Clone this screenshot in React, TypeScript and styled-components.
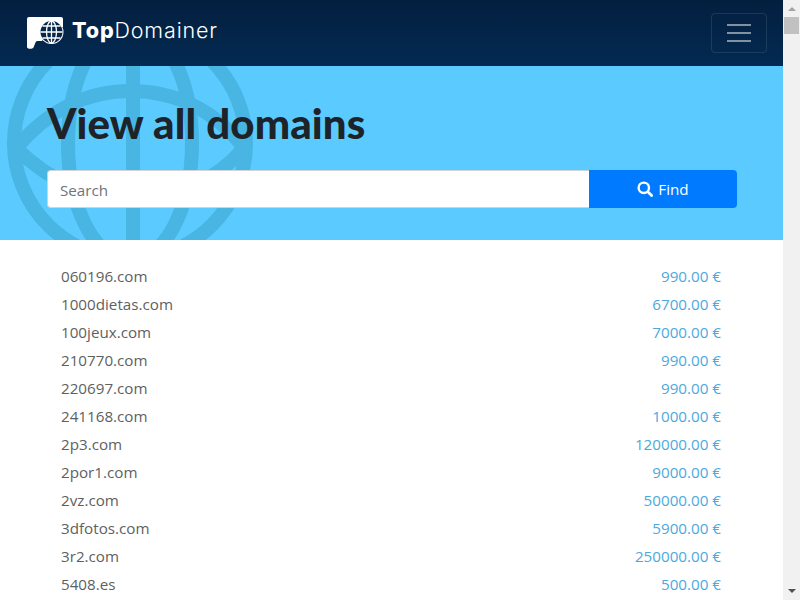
import { FC } from "react";
import styled, { createGlobalStyle } from "styled-components";

const GlobalStyle = createGlobalStyle`
  html, body {
    margin: 0;
    padding: 0;
    height: 100%;
    overflow: hidden;
    background: #fff;
  }
`;

const Page = styled.div`
  display: flex;
  width: 800px;
  height: 600px;
  overflow: hidden;
  font-family: "Open Sans", "Liberation Sans", sans-serif;
`;

const Main = styled.div`
  width: 783px;
  flex: none;
`;

const NavBar = styled.nav`
  height: 66px;
  box-sizing: border-box;
  padding: 13px 16px 0 26px;
  display: flex;
  justify-content: space-between;
  align-items: flex-start;
  background: linear-gradient(180deg, #031f3f 0%, #032a52 100%);
`;

const Brand = styled.a`
  display: flex;
  align-items: center;
  gap: 6px;
  height: 36px;
  color: #fff;
  font-family: Inter, "Open Sans", sans-serif;
  font-size: 21.5px;
  font-weight: 300;
  letter-spacing: 0.85px;

  span {
    margin-top: -2px;
  }

  b {
    font-weight: 800;
  }
`;

const Toggler = styled.button`
  width: 56px;
  height: 40px;
  padding: 0;
  display: grid;
  place-items: center;
  background: transparent;
  border: 1px solid rgba(255, 255, 255, 0.1);
  border-radius: 4px;
`;

const Hero = styled.section`
  position: relative;
  height: 174px;
  box-sizing: border-box;
  padding: 32px 46px 0 47px;
  overflow: hidden;
  background: #5bcbff;
`;

const HeroGlobe = styled.svg`
  position: absolute;
  left: 0;
  top: 0;
  width: 260px;
  height: 174px;
`;

const Title = styled.h1`
  position: relative;
  margin: 0 0 22px;
  font-family: Lato, "Open Sans", sans-serif;
  font-size: 42px;
  line-height: 50px;
  font-weight: 900;
  letter-spacing: 0.08px;
  color: #1e2329;
`;

const SearchForm = styled.form`
  position: relative;
  display: flex;
  height: 38px;
`;

const SearchInput = styled.input`
  flex: 1;
  min-width: 0;
  box-sizing: border-box;
  padding: 1px 12px 0;
  font: inherit;
  font-size: 15.2px;
  border: 1px solid #ced4da;
  border-right: 0;
  border-radius: 4px 0 0 4px;
  background: #fff;

  &::placeholder {
    color: #6c757d;
    opacity: 1;
  }
`;

const FindButton = styled.button`
  width: 148px;
  display: flex;
  align-items: center;
  justify-content: center;
  gap: 5px;
  padding: 0;
  color: #fff;
  font: inherit;
  font-size: 15.2px;
  background: #007bff;
  border: 0;
  border-radius: 0 4px 4px 0;
`;

const DomainList = styled.ul`
  list-style: none;
  margin: 0;
  padding: 22px 62px 0 61px;
`;

const DomainRow = styled.li`
  display: flex;
  justify-content: space-between;
  height: 28px;
  line-height: 28px;
  font-size: 15.2px;
`;

const DomainName = styled.span`
  color: #5f5f5f;
`;

const Price = styled.span`
  color: #4aa9dd;
`;

const ScrollRail = styled.div`
  width: 17px;
  height: 600px;
  flex: none;
  display: flex;
  flex-direction: column;
  align-items: center;
  background: #f1f1f1;
`;

const ScrollArrow = styled.div<{ $down?: boolean }>`
  width: 0;
  height: 0;
  margin: ${(p) => (p.$down ? "auto 0 7px" : "7px 0 6px")};
  border-left: 4px solid transparent;
  border-right: 4px solid transparent;
  ${(p) =>
    p.$down
      ? "border-top: 4px solid #505050;"
      : "border-bottom: 4px solid #a3a3a3;"}
`;

const ScrollThumb = styled.div`
  width: 15px;
  height: 17px;
  background: #c1c1c1;
`;

const domains = [
  ["060196.com", "990.00 €"],
  ["1000dietas.com", "6700.00 €"],
  ["100jeux.com", "7000.00 €"],
  ["210770.com", "990.00 €"],
  ["220697.com", "990.00 €"],
  ["241168.com", "1000.00 €"],
  ["2p3.com", "120000.00 €"],
  ["2por1.com", "9000.00 €"],
  ["2vz.com", "50000.00 €"],
  ["3dfotos.com", "5900.00 €"],
  ["3r2.com", "250000.00 €"],
  ["5408.es", "500.00 €"],
];

// drawn in page coordinates of the navbar corner (26,13)
const LogoMark: FC = () => (
  <svg width="40" height="36" viewBox="26 13 40 36">
    <path
      d="M29 17h32a2 2 0 0 1 2 2v8H50L42 41h-4.500c-1 0-1.500.5-2 1.500l-2 5c-.8 1.600-6.500 2-6.500-.5V19a2 2 0 0 1 2-2z"
      fill="#fff"
    />
    <circle cx="51.500" cy="32" r="12" fill="#fff" />
    <circle cx="51.500" cy="32" r="11" fill="#06264a" />
    <g fill="none" stroke="#fff" strokeWidth="1.300">
      <ellipse cx="51.500" cy="32" rx="5" ry="11" />
      <path d="M51.500 21v22M40.500 32h22M42.500 26h18M42.500 38h18" />
    </g>
  </svg>
);

const SearchIcon: FC = () => (
  <svg width="16" height="16" viewBox="0 0 16 16">
    <circle cx="6.800" cy="6.800" r="5.200" fill="none" stroke="#fff" strokeWidth="2.400" />
    <path d="M10.800 10.800 14.600 14.600" stroke="#fff" strokeWidth="2.800" strokeLinecap="round" />
  </svg>
);

const App: FC = () => {
  return (
    <Page>
      <GlobalStyle />
      <Main>
        <NavBar>
          <Brand>
            <LogoMark />
            <span>
              <b>Top</b>Domainer
            </span>
          </Brand>
          <Toggler aria-label="Menu">
            <svg width="24" height="24" viewBox="0 0 24 24">
              <path
                d="M0 4h24M0 12h24M0 20h24"
                stroke="rgba(255,255,255,0.5)"
                strokeWidth="2"
              />
            </svg>
          </Toggler>
        </NavBar>
        <Hero>
          <HeroGlobe viewBox="0 66 260 174">
            <g fill="none" stroke="#48b5e3" strokeWidth="14">
              <circle cx="130" cy="143" r="116" />
              <ellipse cx="130" cy="143" rx="62" ry="118" />
              <path d="M133 20v230" />
              <path d="M16 148C50 108 90 91 130 91C175 91 215 110 244 148" />
              <path d="M16 148C50 182 90 198 130 198C175 198 215 182 244 148" />
            </g>
          </HeroGlobe>
          <Title>View all domains</Title>
          <SearchForm onSubmit={(e) => e.preventDefault()}>
            <SearchInput placeholder="Search" />
            <FindButton type="button">
              <SearchIcon />
              Find
            </FindButton>
          </SearchForm>
        </Hero>
        <DomainList>
          {domains.map(([name, price]) => (
            <DomainRow key={name}>
              <DomainName>{name}</DomainName>
              <Price>{price}</Price>
            </DomainRow>
          ))}
        </DomainList>
      </Main>
      <ScrollRail>
        <ScrollArrow />
        <ScrollThumb />
        <ScrollArrow $down />
      </ScrollRail>
    </Page>
  );
};

export default App;
